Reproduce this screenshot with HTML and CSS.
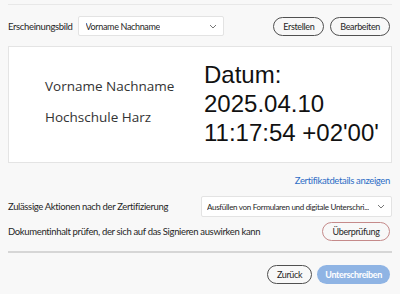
FILE: index.html
```html
<!DOCTYPE html>
<html lang="de">
<head>
  <meta charset="UTF-8">
  <meta name="viewport" content="width=device-width, initial-scale=1.0">
  <title>Signieren</title>
  <link rel="stylesheet" href="styles.css">
</head>
<body>
  <div class="dialog">
    <div class="top-rule"></div>

    <!-- Erscheinungsbild -->
    <div class="appearance-row">
      <span class="label">Erscheinungsbild</span>
      <div class="select select-name">
        <span class="select-text">Vorname Nachname</span>
        <svg class="chevron" width="8" height="5" viewBox="0 0 8 5"><path d="M1 1l3 3 3-3" fill="none" stroke="#777" stroke-width="1"/></svg>
      </div>
      <div class="btn-group">
        <button class="btn btn-outline">Erstellen</button>
        <button class="btn btn-outline">Bearbeiten</button>
      </div>
    </div>

    <!-- Preview of the signature -->
    <div class="preview">
      <div class="preview-left">
        <p>Vorname Nachname</p>
        <p>Hochschule Harz</p>
      </div>
      <div class="preview-right">
        Datum:<br>2025.04.10<br>11:17:54 +02'00'
      </div>
    </div>

    <div class="cert-link">Zertifikatdetails anzeigen</div>

    <div class="perm-row">
      <span class="label">Zulässige Aktionen nach der Zertifizierung</span>
      <div class="select select-perm">
        <span class="select-text">Ausfüllen von Formularen und digitale Unterschri...</span>
        <svg class="chevron" width="8" height="5" viewBox="0 0 8 5"><path d="M1 1l3 3 3-3" fill="none" stroke="#777" stroke-width="1"/></svg>
      </div>
    </div>

    <div class="review-row">
      <span class="label">Dokumentinhalt prüfen, der sich auf das Signieren auswirken kann</span>
      <button class="btn btn-review">Überprüfung</button>
    </div>

    <hr class="divider">

    <div class="footer">
      <button class="btn btn-outline">Zurück</button>
      <button class="btn btn-primary">Unterschreiben</button>
    </div>
  </div>
</body>
</html>
```

FILE: styles.css
```css
/* Signature dialog */
body {
  margin: 0;
  background: #f8f8f8;
  font-family: "Lato", "Open Sans", sans-serif;
  letter-spacing: -0.35px;
  color: #262626;
}

.dialog {
  padding: 0 8px;
}

.top-rule {
  margin-top: 4px;
  border-top: 1px solid #e8e8e8;
}

.label {
  font-size: 9.5px;
  color: #262626;
  white-space: nowrap;
}

/* Select boxes */
.select {
  display: flex;
  align-items: center;
  justify-content: space-between;
  box-sizing: border-box;
  background: #fff;
  border: 1px solid #e3e3e3;
  border-radius: 2px;
  font-size: 9px;
  color: #262626;
  padding: 0 6px 0 7px;
}

.select-text {
  white-space: nowrap;
  overflow: hidden;
}

.select-name {
  width: 146px;
  height: 20px;
  margin-left: 5px;
}

.select-perm {
  width: 191px;
  height: 21px;
  margin-left: auto;
  font-size: 8px;
  letter-spacing: -0.3px;
  padding-left: 5px;
}

.chevron {
  flex-shrink: 0;
  margin-left: 3px;
}

/* Buttons */
.btn {
  font-family: inherit;
  letter-spacing: inherit;
  font-size: 9px;
  height: 19px;
  border-radius: 10px;
  padding: 0 9px;
  background: transparent;
  cursor: pointer;
  white-space: nowrap;
}

.btn-outline {
  border: 1.5px solid #505050;
  color: #262626;
}

.btn-review {
  border: 1.5px solid #c58a8a;
  color: #262626;
  width: 68px;
  padding: 0;
  margin-left: auto;
  margin-right: 2px;
}

.btn-primary {
  border: none;
  background: #8fb4e4;
  color: #fff;
  font-weight: bold;
  padding: 0 8px;
}

.btn-group {
  display: flex;
  gap: 6px;
  margin-left: auto;
  margin-right: 2px;
}

.appearance-row {
  display: flex;
  align-items: center;
  margin-top: 11px;
}

/* Signature preview */
.preview {
  display: flex;
  align-items: center;
  box-sizing: border-box;
  height: 117px;
  margin-top: 10px;
  background: #fff;
  border: 1px solid #e4e4e4;
}

.preview-left {
  width: 195px;
  padding-left: 36px;
  margin-bottom: 6px;
  box-sizing: border-box;
  font-family: "Open Sans", sans-serif;
  letter-spacing: 0;
  font-size: 13.5px;
  line-height: 18px;
  color: #333;
}

.preview-left p {
  margin: 0 0 13px;
}

.preview-left p:last-child {
  margin-bottom: 0;
}

.preview-right {
  font-family: "Liberation Sans", Arial, sans-serif;
  letter-spacing: 0;
  font-size: 24px;
  line-height: 29px;
  color: #111;
  margin-top: -3px;
}

.cert-link {
  text-align: right;
  font-size: 9.5px;
  color: #2d6dc6;
  margin-top: 12px;
  margin-right: 2px;
}

.perm-row {
  display: flex;
  align-items: center;
  margin-top: 10px;
}

.review-row {
  display: flex;
  align-items: center;
  margin-top: 5px;
}

.divider {
  border: none;
  border-top: 2px solid #d6d6d6;
  margin: 10px 0 0;
}

.footer {
  display: flex;
  justify-content: flex-end;
  gap: 5px;
  margin-top: 12px;
  margin-right: 2px;
}
```
